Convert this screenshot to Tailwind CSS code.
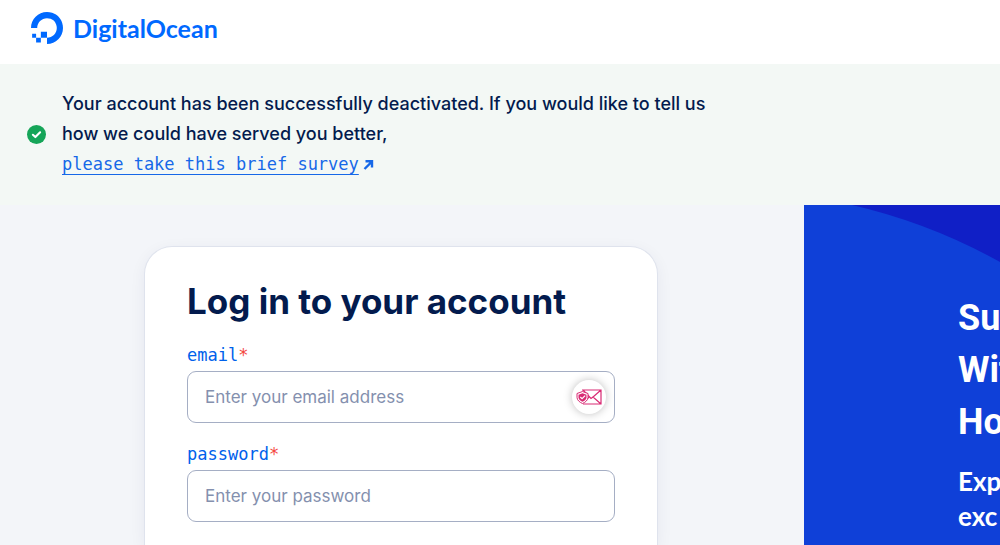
<!DOCTYPE html>
<html lang="en">
<head>
  <meta charset="UTF-8" />
  <meta name="viewport" content="width=device-width, initial-scale=1.0" />
  <title>DigitalOcean</title>
  <script src="https://cdn.jsdelivr.net/npm/@tailwindcss/browser@4"></script>
</head>
<body class="flex h-screen flex-col overflow-hidden bg-white font-['Inter',sans-serif] text-[#031b4e]">
  <header class="flex h-16 shrink-0 items-center pb-2 pl-[31px]">
    <a href="#" class="flex items-center gap-2.5 text-[#0069ff]">
      <svg class="size-8" viewBox="0 0 24 24" fill="currentColor" aria-hidden="true">
        <path d="M12.04 0C5.408-.02.005 5.37.005 11.992h4.638c0-4.923 4.882-8.731 10.064-6.855a6.95 6.95 0 014.147 4.148c1.889 5.177-1.924 10.055-6.84 10.064v-4.61H7.391v4.623h4.61V24c7.86 0 13.967-7.588 11.397-15.83-1.115-3.59-3.985-6.446-7.575-7.575A12.8 12.8 0 0012.039 0zM7.39 19.362H3.828v3.564H7.39zm-3.563 0v-2.978H.85v2.978z" />
      </svg>
      <span class="font-['Lato',sans-serif] text-[25px] leading-8 font-bold">DigitalOcean</span>
    </a>
  </header>

  <div role="status" class="flex shrink-0 items-center gap-4 bg-[#f3f8f5] pt-[25px] pb-[26px] pl-[27px]">
    <svg class="size-[19px] shrink-0" viewBox="0 0 20 20" fill="none" aria-hidden="true">
      <circle cx="10" cy="10" r="10" fill="#15a558" />
      <path d="M6.200 10.300l2.600 2.400L13.800 7.700" stroke="#fff" stroke-width="2.200" stroke-linecap="round" stroke-linejoin="round" />
    </svg>
    <p class="max-w-[660px] text-[18px] leading-[30px] font-medium">
      Your account has been successfully deactivated. If you would like to tell us how we could have served you better,
      <a href="#" class="flex items-center gap-1 font-['DejaVu_Sans_Mono',monospace] text-[17px] font-normal text-[#1668e8]">
        <span class="underline decoration-1 underline-offset-4">please take this brief survey</span>
        <svg class="size-[11px]" viewBox="0 0 11 11" fill="none" stroke="currentColor" stroke-width="2.400" aria-hidden="true">
          <path d="M1.500 10L8.500 3M2.500 2.200h6.500V8.500" />
        </svg>
      </a>
    </p>
  </div>

  <main class="grid min-h-0 flex-1 grid-cols-[minmax(0,1fr)_196px]">
    <section class="flex flex-col items-center bg-[#f3f5f9] pt-[41px] pr-0.5">
      <form class="w-full max-w-[514px] flex-1 rounded-t-[28px] border border-b-0 border-[#dfe3ed] bg-white px-[42px] pt-8 shadow-[0_4px_16px_#0319500f]">
        <h1 class="text-[35px] leading-[44px] font-bold">Log in to your account</h1>

        <label for="email" class="mt-5 block font-['DejaVu_Sans_Mono',monospace] text-[17px] leading-6 text-[#0061eb]">email<span class="text-[#f4473f]">*</span></label>
        <div class="relative mt-1">
          <input type="email" id="email" placeholder="Enter your email address" class="h-[52px] w-full rounded-[9px] border border-[#a5aec4] pr-14 pl-[17px] text-[17px] placeholder:text-[#8490ae]" />
          <button type="button" aria-label="Mask email" class="absolute top-[9px] right-[9px] flex size-[34px] items-center justify-center rounded-full bg-white shadow-[0_0_8px_#00000040]">
            <svg class="h-4 w-[26px]" viewBox="0 0 26 16" fill="none" stroke="#d92b74" aria-hidden="true">
              <path d="M6 1h19v14H7M25 1l-8 7 8 7M7 1l8 8.500L17 8M13 8l-2 2" stroke-width="1.200" />
              <path d="M6.500 2.500l5.500 2v3.800c0 2.800-2.600 5-5.500 6.200-2.900-1.200-5.500-3.400-5.500-6.200V4.500z" fill="#fff" />
              <path d="M6.500 4.200l4 1.500v2.600c0 2-1.900 3.600-4 4.500-2.100-.9-4-2.500-4-4.500V5.700z" fill="#d92b74" stroke="none" />
              <path d="M4.300 8l1.800 1.700L9.100 6.700" stroke="#fff" stroke-width="1.200" />
            </svg>
          </button>
        </div>

        <label for="password" class="mt-[19px] block font-['DejaVu_Sans_Mono',monospace] text-[17px] leading-6 text-[#0061eb]">password<span class="text-[#f4473f]">*</span></label>
        <input type="password" id="password" placeholder="Enter your password" class="mt-1 h-[52px] w-full rounded-[9px] border border-[#a5aec4] px-[17px] text-[17px] placeholder:text-[#8490ae]" />
      </form>
    </section>

    <aside class="relative overflow-hidden bg-[#0f40d8] pt-[87px] pl-[154px] text-white">
      <svg class="absolute top-0 right-0 h-[57px] w-[160px]" viewBox="0 0 160 57" aria-hidden="true">
        <path d="M12 0H160V57Q90 18 12 0z" fill="#101fc6" />
      </svg>
      <h2 class="font-['Roboto',sans-serif] text-[36px] leading-[52px] font-bold whitespace-nowrap">Su<br />Wit<br />Ho</h2>
      <p class="mt-4 font-['Lato',sans-serif] text-[26px] leading-[35px] font-bold whitespace-nowrap">Exp<br />exc</p>
    </aside>
  </main>
</body>
</html>
